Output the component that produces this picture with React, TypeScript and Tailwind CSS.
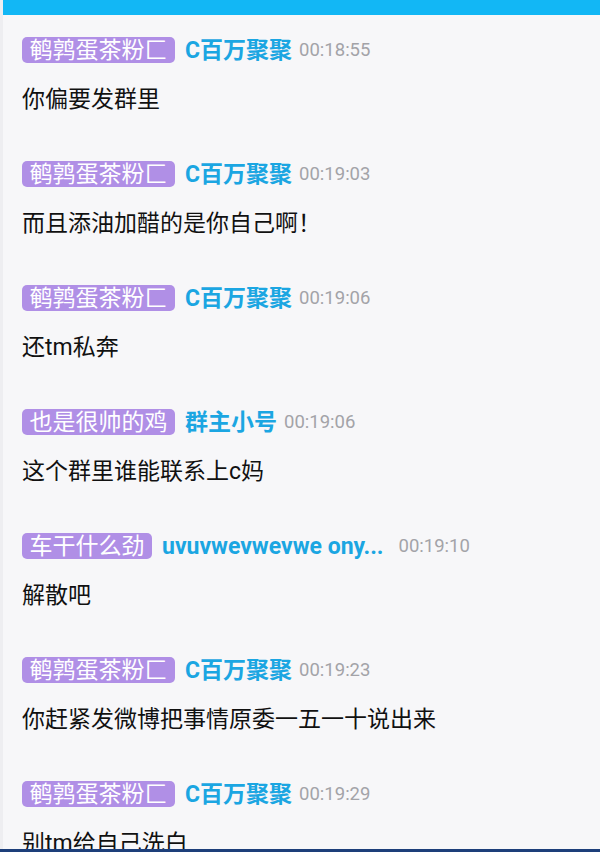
import React from 'react';

interface Message {
  badge: string;
  name: string;
  time: string;
  text: string;
  wide?: boolean;
}

const messages: Message[] = [
  { badge: '鹌鹑蛋茶粉匚', name: 'C百万聚聚', time: '00:18:55', text: '你偏要发群里' },
  { badge: '鹌鹑蛋茶粉匚', name: 'C百万聚聚', time: '00:19:03', text: '而且添油加醋的是你自己啊！' },
  { badge: '鹌鹑蛋茶粉匚', name: 'C百万聚聚', time: '00:19:06', text: '还tm私奔' },
  { badge: '也是很帅的鸡', name: '群主小号', time: '00:19:06', text: '这个群里谁能联系上c妈' },
  { badge: '车干什么劲', name: 'uvuvwevwevwe ony...', time: '00:19:10', text: '解散吧', wide: true },
  { badge: '鹌鹑蛋茶粉匚', name: 'C百万聚聚', time: '00:19:23', text: '你赶紧发微博把事情原委一五一十说出来' },
  { badge: '鹌鹑蛋茶粉匚', name: 'C百万聚聚', time: '00:19:29', text: '别tm给自己洗白' },
];

const font = { fontFamily: 'Roboto, "Noto Sans CJK SC", sans-serif' };

const ChatItem: React.FC<{ msg: Message }> = ({ msg }) => (
  <div className="pt-[22px] pb-[25px]">
    <div className="flex items-center h-[26px]">
      <span className="h-[26px] px-[7.5px] flex items-center rounded-[5px] bg-[#b08fe6] text-white text-[23px] leading-none">
        {msg.badge}
      </span>
      <span className={`ml-[10px] text-[23px] font-bold text-[#1ba6e2] leading-none ${msg.wide ? 'mr-[15px]' : 'mr-[7px]'}`}>
        {msg.name}
      </span>
      <span className="text-[18.5px] text-[#a3a3a8] leading-none">{msg.time}</span>
    </div>
    <div className="mt-[21px] h-[30px] flex items-center text-[23px] text-[#111] leading-none">
      {msg.text}
    </div>
  </div>
);

export default function App() {
  return (
    <div className="w-[600px] h-[852px] overflow-hidden relative bg-[#f7f7f9] flex" style={font}>
      <div className="w-[3px] h-full bg-[#eeeef1] shrink-0" />
      <div className="flex-1 flex flex-col min-w-0">
        <div className="h-[15px] bg-[#12b7f5] shrink-0" />
        <div className="pl-[19px] flex-1 overflow-hidden">
          {messages.map((m, i) => (
            <ChatItem key={i} msg={m} />
          ))}
        </div>
      </div>
      <div className="absolute left-0 right-0 bottom-0 h-[3px] bg-[#1d3f7a]" />
    </div>
  );
}
